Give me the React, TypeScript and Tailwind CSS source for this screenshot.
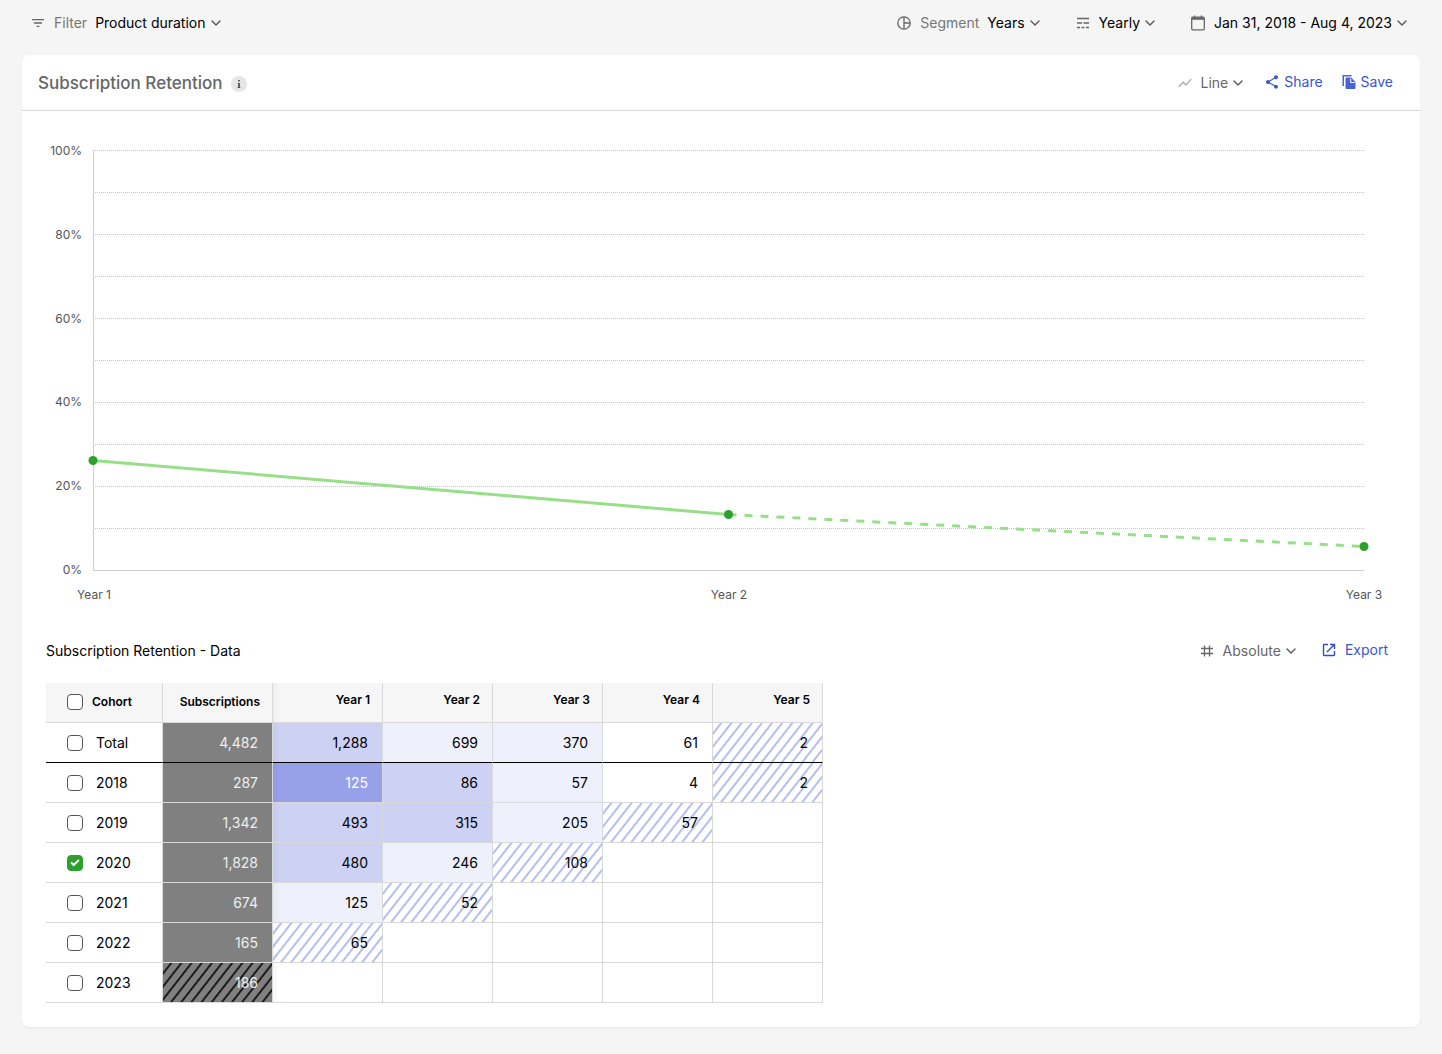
import { Check, ChevronDown } from "lucide-react";
import { MdFilterList, MdShare, MdShowChart } from "react-icons/md";

type Cell = { value: string; tone: string };

const tones = {
  none: "bg-white",
  low: "bg-[#eef0fc]",
  mid: "bg-[#cdd1f3]",
  high: "bg-[#96a1e9] text-white",
  partial: "bg-white bg-[repeating-linear-gradient(128deg,transparent_0_5px,#b4bef0_6px_7px,transparent_8px)]",
};

const rows: { cohort: string; subscriptions: string; cells: Cell[] }[] = [
  {
    cohort: "Total",
    subscriptions: "4,482",
    cells: [
      { value: "1,288", tone: tones.mid },
      { value: "699", tone: tones.low },
      { value: "370", tone: tones.low },
      { value: "61", tone: tones.none },
      { value: "2", tone: tones.partial },
    ],
  },
  {
    cohort: "2018",
    subscriptions: "287",
    cells: [
      { value: "125", tone: tones.high },
      { value: "86", tone: tones.mid },
      { value: "57", tone: tones.low },
      { value: "4", tone: tones.none },
      { value: "2", tone: tones.partial },
    ],
  },
  {
    cohort: "2019",
    subscriptions: "1,342",
    cells: [
      { value: "493", tone: tones.mid },
      { value: "315", tone: tones.mid },
      { value: "205", tone: tones.low },
      { value: "57", tone: tones.partial },
    ],
  },
  {
    cohort: "2020",
    subscriptions: "1,828",
    cells: [
      { value: "480", tone: tones.mid },
      { value: "246", tone: tones.low },
      { value: "108", tone: tones.partial },
    ],
  },
  {
    cohort: "2021",
    subscriptions: "674",
    cells: [
      { value: "125", tone: tones.low },
      { value: "52", tone: tones.partial },
    ],
  },
  { cohort: "2022", subscriptions: "165", cells: [{ value: "65", tone: tones.partial }] },
  { cohort: "2023", subscriptions: "186", cells: [] },
];

const years = ["Year 1", "Year 2", "Year 3", "Year 4", "Year 5"];
const gridLines = [0, 42, 84, 126, 168, 210, 252, 294, 336, 378];

function Chevron() {
  return <ChevronDown className="size-4 text-[#555]" strokeWidth={2} />;
}

function SegmentIcon() {
  return (
    <svg className="size-4" viewBox="0 0 16 16" fill="none" stroke="#666" strokeWidth="1.3">
      <circle cx="8" cy="8" r="6.2" />
      <path d="M8 1.8v12.4M8 8h6.2" />
    </svg>
  );
}

function IntervalIcon() {
  return (
    <svg className="size-4" viewBox="0 0 16 16" fill="none" stroke="#666" strokeWidth="1.3">
      <path d="M2 3.5h12M2 8h5M8.5 8H14M2 12.5h3M6.5 12.5h3M11 12.5h3" />
    </svg>
  );
}

function CalendarIcon() {
  return (
    <svg className="size-4" viewBox="0 0 16 16" fill="none" stroke="#666" strokeWidth="1.3">
      <rect x="1.7" y="2.2" width="12.6" height="12.6" rx="1.2" />
      <path d="M2 3.500h12" strokeWidth="2.6" />
      <path d="M4.5 .6v2M11.5 .6v2" />
    </svg>
  );
}

function SaveIcon() {
  return (
    <svg className="size-4" viewBox="0 0 16 16" fill="#4a62d8">
      <path d="M1.500 1h9v1.500H3V12H1.500z" />
      <path d="M5.500 3.500h4.700L14.500 8v6a1 1 0 0 1-1 1h-8a1 1 0 0 1-1-1V4.500a1 1 0 0 1 1-1z" />
      <path d="M9.700 4.500V8.500h4" fill="none" stroke="#fff" strokeWidth="1" />
    </svg>
  );
}

function HashIcon() {
  return (
    <svg className="size-4" viewBox="0 0 16 16" fill="none" stroke="#666" strokeWidth="1.3">
      <path d="M5.500 2.500v11M10.500 2.500v11M2 5.500h12M2 10.500h12" />
    </svg>
  );
}

function ExportIcon() {
  return (
    <svg className="size-4" viewBox="0 0 16 16" fill="none" stroke="#2f4fc8" strokeWidth="1.4">
      <path d="M7 2.500H3.200a.7.7 0 0 0-.7.7v9.600a.7.7 0 0 0 .7.7h9.600a.7.7 0 0 0 .7-.7V9" />
      <path d="M9 2.500h4.500V7M13.200 2.800 6 10" />
    </svg>
  );
}

function Checkbox({ label, checked = false }: { label: string; checked?: boolean }) {
  return (
    <span className="relative flex size-4 shrink-0">
      <input
        type="checkbox"
        aria-label={label}
        defaultChecked={checked}
        className="peer size-4 appearance-none rounded-[4px] border border-[#555] bg-white checked:border-[#2ca02c] checked:bg-[#2ca02c]"
      />
      <Check className="pointer-events-none absolute inset-0 m-auto hidden size-[10px] text-white peer-checked:block" strokeWidth={5} />
    </span>
  );
}

function Toolbar() {
  return (
    <header className="flex h-[55px] items-center justify-between pr-[10px] pb-[10px] pl-2 text-sm text-black">
      <button className="flex items-center gap-2">
        <MdFilterList className="size-4 text-[#666]" />
        <span className="text-[#777]">Filter</span>
        <span className="flex items-center gap-[2px]">Product duration <Chevron /></span>
      </button>
      <div className="flex items-center gap-8">
        <button className="flex items-center gap-2">
          <SegmentIcon />
          <span className="text-[#777]">Segment</span>
          <span className="flex items-center gap-[2px]">Years <Chevron /></span>
        </button>
        <button className="flex items-center gap-2">
          <IntervalIcon />
          <span className="flex items-center gap-[2px]">Yearly <Chevron /></span>
        </button>
        <button className="flex items-center gap-2">
          <CalendarIcon />
          <span className="flex items-center gap-[2px]">Jan 31, 2018 - Aug 4, 2023 <Chevron /></span>
        </button>
      </div>
    </header>
  );
}

function RetentionChart() {
  return (
    <div className="pt-[39px] pr-14">
      <div className="flex text-xs text-[#555]">
        <div className="-mt-[7px] flex w-[71px] shrink-0 flex-col justify-between pr-[11px] text-right leading-4">
          {["100%", "80%", "60%", "40%", "20%", "0%"].map((label) => (
            <span key={label}>{label}</span>
          ))}
        </div>
        <div className="mb-2 min-w-0 flex-1">
          <svg className="block h-[420px] w-full overflow-visible" role="img" aria-label="Subscription Retention">
            {gridLines.map((y) => (
              <line key={y} x1="0" x2="100%" y1={y} y2={y} stroke="#c4c4c4" strokeDasharray="1 1" shapeRendering="crispEdges" />
            ))}
            <line x1="0" x2="0" y1="0" y2="420" stroke="#ccc" shapeRendering="crispEdges" />
            <line x1="0" x2="100%" y1="420" y2="420" stroke="#ccc" shapeRendering="crispEdges" />
            <line x1="0" y1="310.500" x2="50%" y2="364.500" stroke="#98df8a" strokeWidth="3" />
            <line x1="50%" y1="364.500" x2="100%" y2="396.500" stroke="#98df8a" strokeWidth="3" strokeDasharray="8 8" />
            <circle cx="0" cy="310.500" r="4.500" fill="#2ca02c" />
            <circle cx="50%" cy="364.500" r="4.500" fill="#2ca02c" />
            <circle cx="100%" cy="396.500" r="4.500" fill="#2ca02c" />
          </svg>
        </div>
      </div>
      <div className="-mr-10 ml-8 flex justify-between pt-[9px] text-xs leading-4 text-[#555]">
        {["Year 1", "Year 2", "Year 3"].map((label) => (
          <span key={label} className="w-20 text-center">{label}</span>
        ))}
      </div>
    </div>
  );
}

function CohortTable() {
  return (
    <table className="w-[777px] table-fixed border-separate border-spacing-0 text-sm text-black">
      <thead>
        <tr className="h-10 bg-[#f6f6f6] text-xs">
          <th className="w-[117px] border-r border-b border-[#d9d9d9] p-0 pb-[2px] font-semibold">
            <div className="flex items-center gap-[9px] pl-[21px]">
              <Checkbox label="All cohorts" />
              Cohort
            </div>
          </th>
          <th className="w-[110px] border-r border-b border-[#d9d9d9] p-0 pr-3 pb-[2px] text-right font-semibold">Subscriptions</th>
          {years.map((year, i) => (
            <th
              key={year}
              className={`border-r border-b border-[#d9d9d9] p-0 pr-3 pb-[6px] text-right font-semibold ${i === 0 ? "shadow-[inset_9px_0_8px_-8px_rgba(0,0,0,0.06)]" : ""}`}
            >
              {year}
            </th>
          ))}
        </tr>
      </thead>
      <tbody>
        {rows.map((row) => {
          const line = row.cohort === "Total" ? "border-b-black" : "border-b-[#d9d9d9]";
          return (
            <tr key={row.cohort} className="h-10">
              <td className={`border-r border-b border-r-[#d9d9d9] p-0 ${line}`}>
                <div className="flex items-center gap-[13px] pl-[21px]">
                  <Checkbox label={row.cohort} checked={row.cohort === "2020"} />
                  {row.cohort}
                </div>
              </td>
              <td
                className={`border-r border-b border-r-[#d9d9d9] bg-[#808080] bg-clip-padding p-0 pr-[14px] text-right text-[#eee] ${line} ${row.cohort === "2023" ? "bg-[repeating-linear-gradient(128deg,transparent_0_5px,#1c1c1c_6px_7px,transparent_8px)]" : ""}`}
              >
                {row.subscriptions}
              </td>
              {years.map((year, i) => (
                <td
                  key={year}
                  className={`border-r border-b border-r-[#d9d9d9] bg-clip-padding p-0 pr-[14px] text-right ${line} ${row.cells[i]?.tone ?? tones.none} ${i === 0 ? "shadow-[inset_9px_0_8px_-8px_rgba(0,0,0,0.06)]" : ""}`}
                >
                  {row.cells[i]?.value}
                </td>
              ))}
            </tr>
          );
        })}
      </tbody>
    </table>
  );
}

export default function App() {
  return (
    <div className="min-h-screen bg-[#f5f5f5] px-[22px] pb-[27px] font-[Inter,sans-serif]">
      <Toolbar />
      <main className="rounded-lg bg-white pb-6 shadow-[0_1px_2px_rgba(0,0,0,0.06)]">
        <div className="flex h-14 items-center justify-between border-b border-[#d9d9d9] pr-[27px] pl-4">
          <div className="flex items-center gap-2 pt-[2px]">
            <h1 className="text-[17px] font-medium text-[#666]">Subscription Retention</h1>
            <button aria-label="About this chart" className="flex size-4 items-center justify-center rounded-full bg-[#e6e6e6]">
              <svg className="size-4" viewBox="0 0 16 16" fill="#444">
                <path d="M7.200 4h1.600v1.600H7.200zM7.200 7h1.600v5H7.200zM6.600 7h1v.8h-1zM6.600 11.200h2.800v.8H6.600z" />
              </svg>
            </button>
          </div>
          <div className="flex items-center gap-[18px] text-sm text-[#3a55d0]">
            <button className="flex items-center gap-2 text-[#666]">
              <MdShowChart className="size-4 text-[#aaa]" />
              <span className="flex items-center gap-[2px]">Line <Chevron /></span>
            </button>
            <button className="flex items-center gap-1 pb-[2px]">
              <MdShare className="size-4" />
              Share
            </button>
            <button className="flex items-center gap-1 pb-[2px]">
              <SaveIcon />
              Save
            </button>
          </div>
        </div>
        <RetentionChart />
        <section className="px-6 pt-[34px]">
          <div className="mb-[18px] flex h-7 items-center justify-between pr-2 text-sm">
            <h2 className="text-black">Subscription Retention - Data</h2>
            <div className="flex items-center gap-[22px]">
              <button className="flex items-center gap-2 text-[#666]">
                <HashIcon />
                <span className="flex items-center gap-[2px]">Absolute <Chevron /></span>
              </button>
              <button className="flex items-center gap-2 pb-[2px] text-[#3a55d0]">
                <ExportIcon />
                Export
              </button>
            </div>
          </div>
          <CohortTable />
        </section>
      </main>
    </div>
  );
}
